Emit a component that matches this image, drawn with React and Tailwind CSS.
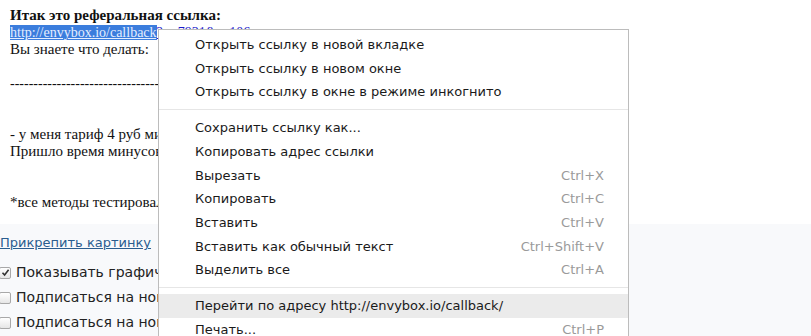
export default function App() {
  const serif = { fontFamily: '"Liberation Serif", "DejaVu Serif", serif' };
  const sans = { fontFamily: '"DejaVu Sans", "Noto Sans", sans-serif' };

  const group1 = [
    ["Открыть ссылку в новой вкладке", ""],
    ["Открыть ссылку в новом окне", ""],
    ["Открыть ссылку в окне в режиме инкогнито", ""],
  ];
  const group2 = [
    ["Сохранить ссылку как...", ""],
    ["Копировать адрес ссылки", ""],
    ["Вырезать", "Ctrl+X"],
    ["Копировать", "Ctrl+C"],
    ["Вставить", "Ctrl+V"],
    ["Вставить как обычный текст", "Ctrl+Shift+V"],
    ["Выделить все", "Ctrl+A"],
  ];
  const group3 = [
    ["Перейти по адресу http://envybox.io/callback/", "", true],
    ["Печать...", "Ctrl+P"],
  ];

  const Item = ({ label, sc, active }) => (
    <div
      className={`flex h-[23.7px] items-center justify-between pl-[36px] pr-[24px] text-[13px] text-[#1a1a1a] ${
        active ? "bg-[#ebebeb]" : ""
      }`}
    >
      <span className="whitespace-nowrap">{label}</span>
      {sc ? <span className="whitespace-nowrap text-[#9a9a9a]">{sc}</span> : null}
    </div>
  );

  const Sep = ({ mt }) => <div className={`h-px bg-[#e6e6e6] ${mt} mb-[6px]`} />;

  return (
    <div className="relative h-[336px] w-[811px] overflow-hidden bg-white">
      <div className="flex h-[224px] flex-col pl-[10px] pt-[7px] text-[15px] leading-[17px] text-[#111]" style={serif}>
        <div className="font-bold">Итак это реферальная ссылка:</div>
        <div className="whitespace-nowrap text-[14px]">
          <span className="bg-[#3b7ddd] text-[#e4eeff] underline">http://envybox.io/callback</span>
          <span className="text-[#1a1acc] underline">?u=7931&amp;r=106</span>
        </div>
        <div>Вы знаете что делать:</div>
        <div>&nbsp;</div>
        <div className="whitespace-nowrap text-[14px]">------------------------------------------------------------------</div>
        <div>&nbsp;</div>
        <div>&nbsp;</div>
        <div className="whitespace-nowrap">- у меня тариф 4 руб минута, а звонков в день около 20</div>
        <div className="whitespace-nowrap">Пришло время минусов и плюсов</div>
        <div>&nbsp;</div>
        <div>&nbsp;</div>
        <div className="whitespace-nowrap">*все методы тестировались лично мной</div>
      </div>

      <div className="flex h-[112px] flex-col bg-[#f8f9fb]" style={sans}>
        <div className="pt-[10px] text-[13px] leading-[18px]">
          <span className="text-[#2a5d8f] underline">Прикрепить картинку</span>
        </div>
        <div className="mt-[8px] flex flex-col">
          {[
            ["Показывать графический смайлик", true],
            ["Подписаться на новые комментарии", false],
            ["Подписаться на новые темы форума", false],
          ].map(([t, c], i) => (
            <div key={i} className="flex h-[25px] items-center gap-[5px] whitespace-nowrap text-[14px] text-[#222]">
              <span className="ml-[-1px] flex h-[12px] w-[12px] shrink-0 items-center justify-center rounded-[2px] border border-[#a8a8a8] bg-gradient-to-b from-[#ffffff] to-[#e6e6e6]">
                {c ? (
                  <svg width="9" height="9" viewBox="0 0 9 9">
                    <path d="M1.5 4.8 L3.6 7 L7.6 1.8" stroke="#333" strokeWidth="1.6" fill="none" />
                  </svg>
                ) : null}
              </span>
              <span>{t}</span>
            </div>
          ))}
        </div>
      </div>

      <div
        className="absolute left-[158px] top-[29px] w-[471px] border border-[#bcbcbc] bg-white pt-[3px] pb-[4px]"
        style={sans}
      >
        {group1.map(([l, s], i) => (
          <Item key={i} label={l} sc={s} />
        ))}
        <Sep mt="mt-[5px]" />
        {group2.map(([l, s], i) => (
          <Item key={i} label={l} sc={s} />
        ))}
        <Sep mt="mt-[5px]" />
        {group3.map(([l, s, a], i) => (
          <Item key={i} label={l} sc={s} active={a} />
        ))}
      </div>
    </div>
  );
}
